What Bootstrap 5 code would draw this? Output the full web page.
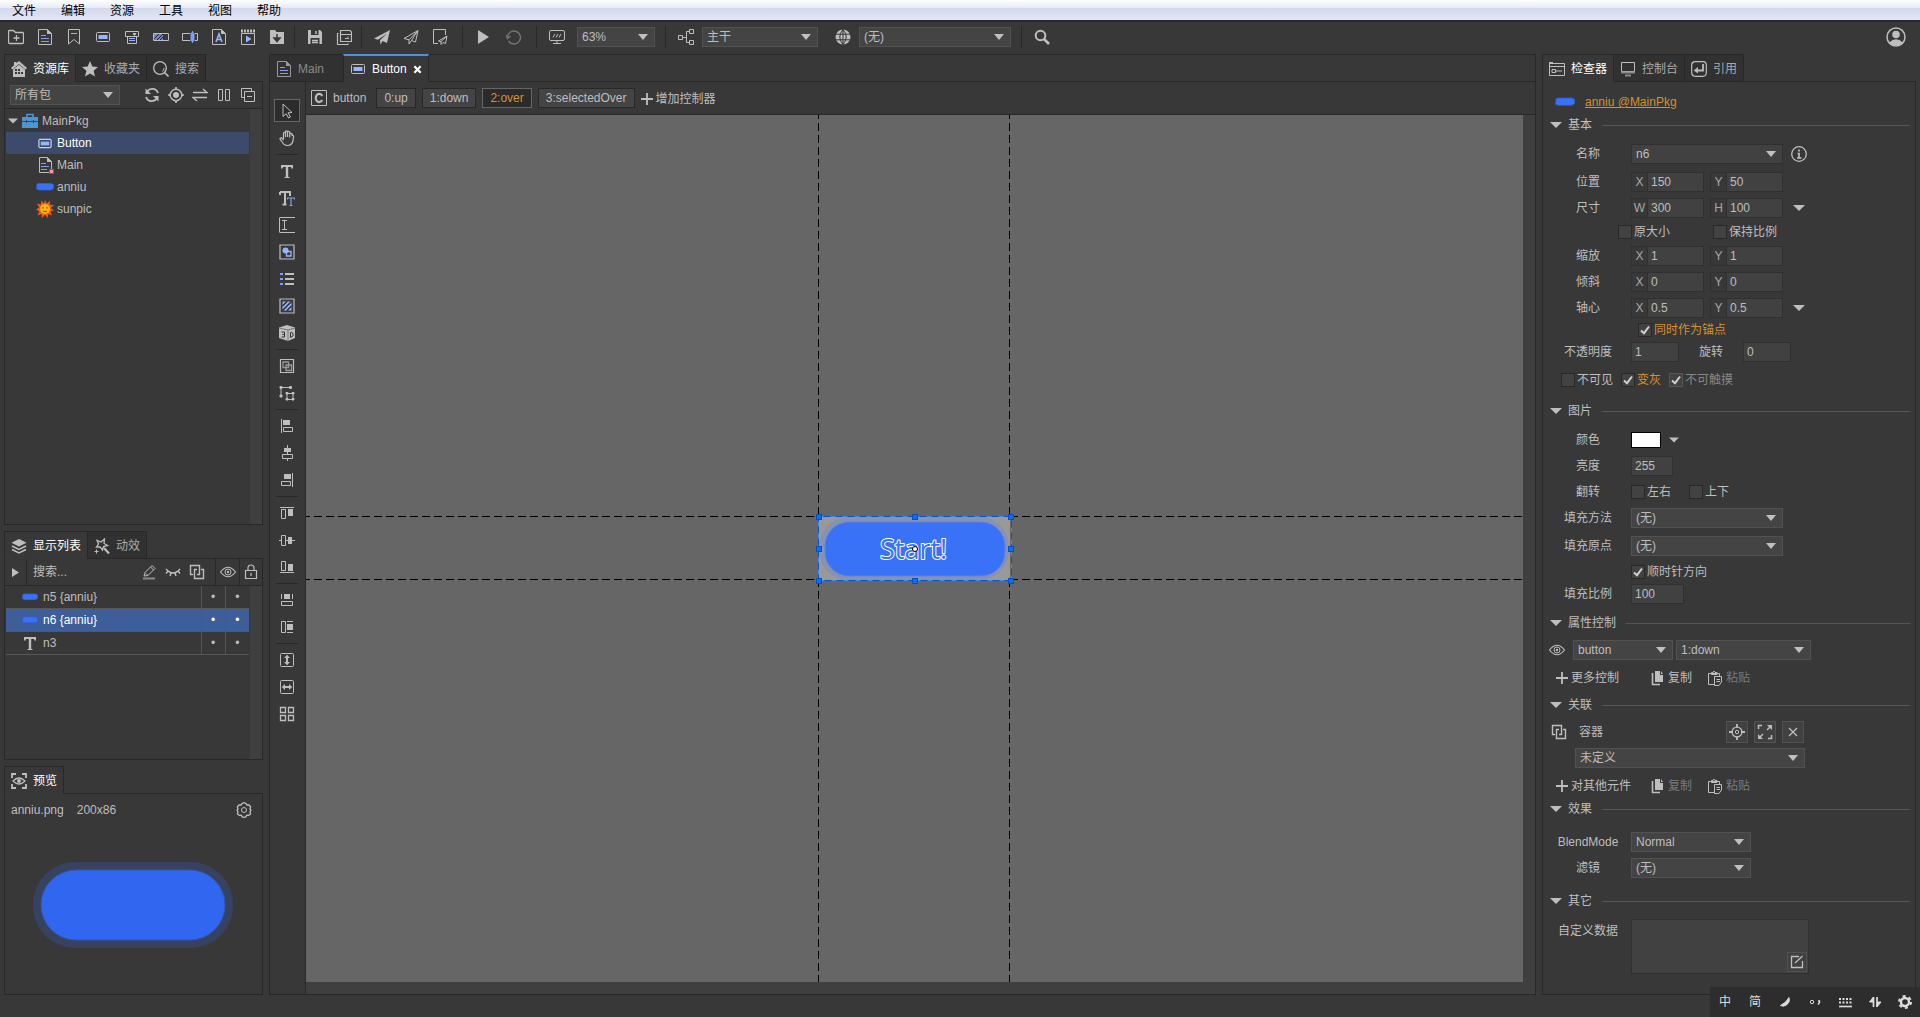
<!DOCTYPE html>
<html lang="zh-CN" data-bs-theme="dark">
<head>
<meta charset="utf-8">
<meta name="viewport" content="width=device-width, initial-scale=1">
<title>MainPkg - Button</title>
<link rel="stylesheet" href="https://cdn.jsdelivr.net/npm/bootstrap@5.3.0/dist/css/bootstrap.min.css">
<style>
:root{--bg:#383838;--line:#282828;--fg:#bebebe;--field:#444;--edge:#525252;--hot:#d4912f;--tint:#96b4ff}
body{background:var(--bg);color:var(--fg);font:12px/16px "Liberation Sans","Noto Sans CJK SC",sans-serif;overflow:hidden}
svg{flex:none;display:block}
.ic{width:16px;height:16px;fill:none;stroke:currentColor}
.ic-8{width:9px;height:9px}.ic-10{width:10px}.ic-12{width:12px}.ic-18{width:18px}.ic-20{width:20px;height:20px}
button,select,input,textarea{font:inherit!important;color:inherit}
.menubar{height:20px;background:linear-gradient(#fff 0,#e6e9f5 8px,#d3d9ec 8px,#e2e7f5 100%)}
.menubar a{color:#000;text-decoration:none;padding:3px 0 0 12px;margin-right:13px;line-height:17px}
.toolbar{height:34px;border-top:2px solid var(--line);padding:0 10px 3px 1px}
.tool{border:0;background:none;width:29px;height:27px;padding:0;display:flex;align-items:center;justify-content:center;color:var(--fg);border-radius:0}
.tool:hover{color:#fff}
.tool.idle{color:#757575}
.vsep{width:1px;height:22px;background:var(--line);margin:0 5px 0 3px}
.far{margin-left:10px}.near{margin-left:2px}
.form-select.pick{width:auto;height:20px;min-height:0;padding:0 20px 0 4px;border:1px solid var(--edge);border-radius:0;background:var(--field) url("data:image/svg+xml,%3Csvg xmlns='http://www.w3.org/2000/svg' width='10' height='6'%3E%3Cpath d='M0 0h10L5 6z' fill='%23c0c0c0'/%3E%3C/svg%3E") no-repeat right 6px center/10px 6px;color:var(--fg);line-height:18px}
.form-select.pick.combo{border-color:#303030;background-color:#414141}
.workspace{gap:6px;padding:0 4px 22px}
.sidecol{width:259px;gap:6px}
.inspector{width:374px}
.short{height:229px}
.tabrow{margin-bottom:-1px;position:relative;flex-wrap:nowrap}
.tabrow .nav-link{display:flex;align-items:center;gap:6px;height:28px;padding:2px 6px 0;border:1px solid var(--line);border-radius:0;background:#313131;color:#aaa;margin-right:-1px;line-height:16px}
.tabrow .nav-link.active{background:var(--bg);color:#fff;border-bottom-color:var(--bg)}
.tabrow .nav-link .ic{color:var(--fg)}
.panelbox{border:1px solid var(--line);background:var(--bg);min-height:0}
.subbar{height:27px;border-bottom:1px solid var(--line)}
.libbar{padding:0 6px 0 5px}
.track{width:12px;background:#3f3f3f}
.tree{padding:1px 1px 0}
.treerow{display:flex;align-items:center;height:22px;padding-left:30px;gap:3px;color:var(--fg);text-decoration:none}
.treerow.rootrow{padding-left:2px}
.treerow.picked{background:#3c4b6b;color:#fff}
.treerow .ic{height:18px}
.treerow .ic-key{height:15px}
.laywrap{padding:0 1px}
.laytable{width:243px;border-collapse:collapse}
.laytable td{height:22px;padding:0;border-bottom:1px solid #575757;line-height:16px}
.laytable td+td{width:24px;border-left:1px solid #575757;text-align:center}
.laytable .picked{background:#3d5e99;color:#fff}
.layname{display:flex;align-items:center;gap:4px;height:22px;padding-left:15px}
.foldcell{width:22px}
.searchbox{border:0;background:none;padding:0;width:80px;color:var(--fg)}
.searchbox::placeholder{color:var(--fg);opacity:1}
.searchcell{padding:0 10px 0 6px}
.doctabs{height:27px;margin:-1px 0 0 -1px}
.doctabs .nav-link{padding-right:19px;color:#8c8c8c}
.doctabs .nav-link .ic{color:#999}
.doctabs .nav-link.active{border-top:2px solid #4c92dc;padding:1px 6px 0}
.doctabs .nav-link.active .ic{color:var(--fg)}
.doctabs .nav-link.active .closer{color:#fff}
.docbody{border-top:1px solid var(--line)}
.strip{width:36px;padding:15px 1px 0 0;border-right:1px solid var(--line)}
.strip .tool{width:26px;height:23px;margin:2px 0}
.strip .tool.active{background:#2c2c2c;border:1px solid #666}
.strip .brk{width:22px;height:1px;background:var(--line);margin:3px 0 2px}
.ctrlbar{height:33px;padding-left:5px;gap:6px;border-bottom:1px solid var(--line)}
.page{height:20px;padding:0 7px;border:1px solid var(--line);border-radius:0;background:var(--field);color:var(--fg);line-height:17px}
.btn.page.active{background:#2b2b2b;border-color:#666;color:var(--hot)}
.ctrlbar .act{padding-top:2px}
.stagewrap{background:#3f3f3f;padding:0 12px 12px 0}
.stage{background:#666;position:relative;overflow:hidden}
.guide-h,.guide-v{position:absolute}
.guide-h{left:0;right:0;height:1px;background:repeating-linear-gradient(90deg,#000 0 4px,transparent 4px 8px,#000 8px 12px)}
.guide-v{top:0;bottom:0;width:1px;background:repeating-linear-gradient(#000 0 4px,transparent 4px 8px,#000 8px 12px)}
.g-top{top:calc(50% - 33px)}.g-bottom{top:calc(50% + 30px)}
.g-left{left:calc(50% - 97px)}.g-right{left:calc(50% + 94px)}
.sprite{position:absolute;left:calc(50% - 97px);top:calc(50% - 33px);overflow:visible}
.startlabel{font:27px "Open Sans","Noto Sans",sans-serif;fill:#3a72f7;stroke:#fff;stroke-width:2px;paint-order:stroke;stroke-linejoin:round}
.inspector .panelbox{padding:7px 5px 0 2px}
.reslink{padding-left:10px;gap:10px}
.hd{display:flex;align-items:center;height:20px;padding-left:5px;gap:6px}
.hd hr{flex:1;margin:0 0 0 4px;border-top:1px solid #555;opacity:1}
.hd .ic{width:12px}
.fr{display:flex;align-items:center;height:26px}
.fr.tight{height:22px}
.s6{margin-top:6px}.s2{margin-top:2px}.s10{margin-top:10px}
.fl{width:86px;text-align:center}
.fld{height:20px;width:56px;min-height:0;border:1px solid #303030;border-radius:0;background:#414141;color:var(--fg);padding:0 3px;line-height:18px}
.fld.pre{border-left:0}
.fld.f-s{width:42px}.fld.f-m{width:48px}.fld.f-l{width:53px}
.ax{width:17px;height:20px;border:1px solid #303030;text-align:center;line-height:18px;color:#a8a8a8}
.pair{width:79px}
.fld:focus,.pick:focus{box-shadow:none;border-color:#6b8fd6;background-color:#444}
.tick{display:flex;align-items:center;gap:2px}
.tick input{appearance:none;width:14px;height:14px;margin:0;border:1px solid var(--line);background:#424242 no-repeat center/10px 10px}
.tick input:checked{background-image:url("data:image/svg+xml,%3Csvg xmlns='http://www.w3.org/2000/svg' viewBox='0 0 10 10'%3E%3Cpath d='M1 5.5l3 2.7L9 1.5' fill='none' stroke='%23d0d0d0' stroke-width='2'/%3E%3C/svg%3E")}
.tick.dim{color:#868686}.tick.dim input{border-color:#575757}
.keepsize{padding-left:73px}.keepsize .tick:first-child{width:95px}
.anchor.fr{padding-left:93px;height:18px}
.flip{width:58px}
.rotlabel{width:64px;text-align:center}
.hot{color:var(--hot)}
.act{border:0;background:none;padding:0;display:flex;align-items:center;gap:3px;color:var(--fg)}
.act.off{color:#7a7a7a}.act .ic{color:var(--fg)}
.vcell{height:100%;border-right:1px solid var(--line)}
.eyecell{width:24px}.lockcell{width:22px}
.actrow{padding-left:11px}
.actrow .act:nth-child(1){width:93px}.actrow .act:nth-child(2){width:58px}
.relrow{padding-left:6px;gap:12px}
.relbtns{gap:6px;margin:0 106px 0 auto}
.relpick{padding-left:30px}
.sq{width:22px;height:22px;padding:0;border:1px solid var(--edge);border-radius:0;background:#414141;display:flex;align-items:center;justify-content:center;color:var(--fg)}
.swatch{width:30px;height:16px;border:1px solid #000;background:#fff;padding:0}
.memo.fld{width:178px;height:55px;resize:none}
.memowrap{position:relative}
.memowrap .sq{position:absolute;right:2px;bottom:2px;width:20px;height:20px}
.pvhead{padding:8px 10px 0 6px;gap:13px}
.pvbody{padding:0 2px 2px 0}
.imebar{position:absolute;right:0;bottom:0;width:210px;height:30px;background:#2d2d2d;color:#ddd;z-index:5}
.imebar button{width:30px;border:0;background:none;padding:0;display:flex;justify-content:center;align-items:center}
.form-select.w-pack{width:110px}.form-select.w-zoom{width:78px;margin-left:6px}.form-select.w-br{width:116px}.form-select.w-lang{width:152px}
.form-select.w-ctl{width:100px}.form-select.w-pg{width:135px;margin-left:3px}.form-select.w-rel{width:230px}.form-select.w-fx{width:120px}
</style>
</head>
<body class="d-flex flex-column vh-100 position-relative">
<svg width="0" height="0" class="position-absolute" aria-hidden="true">
<defs>
<symbol id="folder" viewBox="0 0 16 16"><path d="M.5 13V2.500Q.5 1.500 1.500 1.500H5.500L7.500 3.500H14.500Q15.500 3.500 15.500 4.500V13.500Q15.500 14.500 14.500 14.500H1.500Q.5 14.500 .5 13ZM8.500 6V12M5.500 9H11.500" stroke-width="1.300"/></symbol>
<symbol id="doc" viewBox="0 0 16 16"><path d="M1.500.500H10.500L14.500 4.500V15.500H1.500Z"/><path d="M10 0L15 5H10Z" fill="currentColor" stroke="none"/><path d="M4 6.500H9M4 9.500H12M4 12.500H12" stroke="#7f9ff0"/></symbol>
<symbol id="mark" viewBox="0 0 16 16"><path d="M2.500.500H13.500V15L8 10.500L2.500 15Z"/><path d="M5 4.500H11" stroke="#96b4ff"/></symbol>
<symbol id="btnic" viewBox="0 0 16 16"><rect x="1.500" y="3.500" width="13" height="9" rx="1"/><rect x="3.500" y="6" width="9" height="4" fill="#96b4ff" stroke="none"/></symbol>
<symbol id="print" viewBox="0 0 16 16"><path d="M1.500 2.500H14.500V7.500H1.500ZM3.500 7.500V14.500H12.500V7.500"/><path d="M9 4.500H12L10.500 6.500Z" fill="currentColor"/><path d="M5 9.500H11M5 11.500H11" stroke="#96b4ff"/></symbol>
<symbol id="prog" viewBox="0 0 16 16"><path d="M.5 4.500H15.500V11.500H.500Z"/><path d="M1 5H10V11H1Z" fill="#6f88c8" stroke="none"/><path d="M1 10L6 5M4 11L10 5M7 11L10 8" stroke="#222"/></symbol>
<symbol id="slide" viewBox="0 0 16 16"><path d="M8 4.500H.500V11.500H8M13 4.500H15.500V11.500H13"/><path d="M9 4H12V12H9ZM10.500 2V14" stroke="#7f9ff0" fill="#7f9ff0"/></symbol>
<symbol id="fontic" viewBox="0 0 16 16"><path d="M1.500.500H10.500L14.500 4.500V15.500H1.500Z"/><path d="M10 0L15 5H10Z" fill="currentColor" stroke="none"/><path d="M5 13L8 5L11 13M6 10.500H10" stroke="#96b4ff" stroke-width="1.600"/></symbol>
<symbol id="movie" viewBox="0 0 16 16"><path d="M1.500 4.500H14.500V15.500H1.500Z"/><path d="M1 2H15" stroke-width="3" stroke-dasharray="2 1"/><path d="M6 6.500L11.500 10L6 13.500Z" fill="#96b4ff" stroke="none"/></symbol>
<symbol id="import" viewBox="0 0 16 16"><path d="M1 1H6L7.500 3H15V15H1Z" fill="currentColor" stroke="none"/><path d="M8 5V10M5 9L8 12.500L11 9Z" stroke="#383838" stroke-width="1.500" fill="#383838"/></symbol>
<symbol id="save" viewBox="0 0 16 16"><path d="M1 1H13L15 3V15H1Z" fill="currentColor" stroke="none"/><path d="M4 1H11.500V6H4ZM3.500 9H12.500V15H3.500Z" fill="#383838" stroke="none"/><path d="M9 2V5M5 11.500H11M5 13.500H11" stroke-width="1.500"/></symbol>
<symbol id="saveall" viewBox="0 0 16 16"><path d="M4.500 1.500H14L15.500 3V12.500H4.500ZM4.500 5.500H15.500M12 7.500V8.500M9 9.500H13M2.500 4.500H1.500V15.500H12V14.500" stroke-width="1.200"/></symbol>
<symbol id="plane" viewBox="0 0 16 16"><path d="M0 9.500L16 1L13 14L8.500 12L6.500 15.500L6 11.200L13 4.500L4 10.800Z" fill="currentColor" stroke="none"/></symbol>
<symbol id="plane2" viewBox="0 0 16 16"><path d="M1 9.500L15 1.500L12.500 13L8.500 11.500L6 15V10.800ZM6 10.800L14.500 2M8.500 11.500L14.500 2"/></symbol>
<symbol id="docplane" viewBox="0 0 16 16"><path d="M6 14.500H1.500V.500H13.500V6M6.500 12L15 7L13.500 14.500L11 13.500L9 15.500V12.500ZM9 12.500L15 7"/></symbol>
<symbol id="play" viewBox="0 0 16 16"><path d="M3 1L14 8L3 15Z" fill="currentColor" stroke="none"/></symbol>
<symbol id="fold" viewBox="0 0 9 9"><path d="M1 0L8 4.500L1 9Z" fill="currentColor" stroke="none"/></symbol>
<symbol id="undo" viewBox="0 0 16 16"><path d="M2.500 12A6.500 6.500 0 1 0 1.500 8" stroke-width="1.400"/><path d="M0 6L1.500 9.500L4.500 7" stroke-width="1.400"/></symbol>
<symbol id="monitor" viewBox="0 0 16 16"><rect x=".5" y="1.500" width="15" height="10" rx="1.500"/><path d="M8 12V14.500M4 14.500H12M4 8.500L6 5M7 8.500L9 5M10 8.500L12 5"/></symbol>
<symbol id="branch" viewBox="0 0 16 16"><path d="M.5 6.500H4.500V10.500H.500ZM11.500 .500H15.500V4.500H11.500ZM11.500 11.500H15.500V15.500H11.500ZM4.500 8.500H8.500M11.500 2.500H8.500V13.500H11.500"/></symbol>
<symbol id="globe" viewBox="0 0 16 16"><circle cx="8" cy="8" r="7.500" fill="currentColor" stroke="none"/><path d="M0 5.200H16M0 10.800H16M8 0V16M8 .500Q1.500 8 8 15.500M8 .500Q14.500 8 8 15.500" stroke="#383838"/></symbol>
<symbol id="find" viewBox="0 0 16 16"><circle cx="6.500" cy="6.500" r="4.800" stroke-width="2"/><path d="M10 10L15 15" stroke-width="2.600"/></symbol>
<symbol id="user" viewBox="0 0 16 16"><circle cx="8" cy="8" r="7.200" stroke-width="1.200"/><circle cx="8" cy="6" r="3" fill="currentColor" stroke="none"/><path d="M2.500 12.500Q8 7 13.500 12.500Q8 17 2.500 12.500" fill="currentColor" stroke="none"/></symbol>
<symbol id="home" viewBox="0 0 16 16"><path d="M3 1H5.500V4H3ZM8 0L16 7L14.500 8.500L8 3L1.500 8.500L0 7Z" fill="currentColor" stroke="none"/><path d="M2 8.500L8 3.800L14 8.500V16H2Z" fill="currentColor" stroke="none"/><path d="M4 8H6V10H4ZM7 8H9V10H7ZM4 11H6V13H4ZM7 11H9V13H7ZM10 11H12V13H10Z" fill="#383838" stroke="none"/></symbol>
<symbol id="star" viewBox="0 0 16 16"><path d="M8 0L10.300 5.600L16 6L11.600 9.800L13 15.500L8 12.400L3 15.500L4.400 9.800L0 6L5.700 5.600Z" fill="currentColor" stroke="none"/></symbol>
<symbol id="lens" viewBox="0 0 16 16"><circle cx="7" cy="7" r="6.300" stroke-width="1.300"/><path d="M11.500 11.500L15.500 15.500" stroke-width="1.600"/><path d="M9.500 10.500Q11 9 11 7"/></symbol>
<symbol id="sync" viewBox="0 0 16 16"><path d="M2.500 6.500A6 6 0 0 1 14 6M13.500 9.500A6 6 0 0 1 2 10" stroke-width="1.800"/><path d="M1.500 1.500V7H7ZM14.500 14.500V9H9Z" fill="currentColor" stroke="none"/></symbol>
<symbol id="aim" viewBox="0 0 16 16"><circle cx="8" cy="8" r="5.800" stroke-width="1.400"/><circle cx="8" cy="8" r="3" fill="currentColor" stroke="none"/><path d="M8 0V3M8 13V16M0 8H3M13 8H16" stroke-width="1.600"/></symbol>
<symbol id="swap" viewBox="0 0 16 16"><path d="M1 5.500H15L11 2M15 10.500H1L5 14" stroke-width="1.300"/></symbol>
<symbol id="cols" viewBox="0 0 16 16"><path d="M2.500 2.500H6.500V13.500H2.500ZM9.500 2.500H13.500V13.500H9.500Z"/></symbol>
<symbol id="collapse" viewBox="0 0 16 16"><path d="M4.500 4.500H14.500V14.500H4.500ZM4 10.500H1.500V1.500H11.500V4M7 9.500H12"/></symbol>
<symbol id="tri" viewBox="0 0 12 16"><path d="M0 5H12L6 11Z" fill="currentColor" stroke="none"/></symbol>
<symbol id="case" viewBox="0 0 18 18"><path d="M6 5V2.500H12V5" stroke="#4c97cf" stroke-width="1.600"/><path d="M1 5H17V16H1Z" fill="#4c97cf" stroke="none"/><path d="M1 9.500H17M5.500 8V11M12.500 8V11" stroke="#2a4c66"/></symbol>
<symbol id="pill" viewBox="0 0 18 18"><path d="M1 6L3 5.500H15L17.500 6.500V10.500L15 12H3L.500 11Z" fill="#3a72f7" stroke="#2d5fd8" stroke-width=".8"/></symbol>
<symbol id="sun" viewBox="0 0 18 18"><path d="M9 0L10.500 3.500L14 1L13.800 4.700L18 5L14.800 8L18 10.500L14.500 11.300L16 15.500L12.300 14L11.500 18L9 14.800L6 18L5.500 14L1.500 15.500L3.300 11.500L0 9.500L3.300 7.500L.8 3.500L4.800 4.500L5.500 .500L8 3.500Z" fill="#f4591c" stroke="none"/><circle cx="9" cy="9" r="5" fill="#fdb316" stroke="none"/><path d="M7 7V8.500M11 7V8.500M7 11Q9 12.500 11 11" stroke="#7a4a10"/></symbol>
<symbol id="docred" viewBox="0 0 18 18"><path d="M3.500 1.500H11.500L15.500 5.500V16.500H3.500Z"/><path d="M11 1L16 6H11Z" fill="currentColor" stroke="none"/><path d="M5 7.500H10M5 10.500H13M5 13.500H11" stroke="#7f9ff0"/><rect x="13.500" y="13.500" width="4" height="4" fill="#f99" stroke="#e03030"/></symbol>
<symbol id="layers" viewBox="0 0 16 16"><path d="M8 1L15.500 4.800L8 8.500L.500 4.800Z" fill="currentColor" stroke="none"/><path d="M1 8L8 11.500L15 8M1 11.500L8 15L15 11.500" stroke-width="1.500"/></symbol>
<symbol id="wand" viewBox="0 0 16 16"><path d="M7 4L10.500 1L10 5.500L13.500 7.500L9.500 8.500L8.500 12L6 8.800L2.500 9L4.500 6L3 2.500Z" stroke-width="1.300"/><path d="M10 10L15 15.500" stroke-width="2.200"/><path d="M2.500 11.500V15.500M.5 13.500H4.500"/></symbol>
<symbol id="pencil" viewBox="0 0 16 16"><path d="M3 12L4 8.500L11 1.500L14 4.500L7 11.500ZM9.500 3L12.500 6M5 9.500L6.500 11"/><path d="M2 14.500H14" stroke-width="2" stroke="#8a8a8a"/></symbol>
<symbol id="lash" viewBox="0 0 16 16"><path d="M1 5Q8 13 15 5M3 7L1 9.500M6 9L5 12M10 9L11 12M13 7L15 9.500" stroke-width="1.400"/></symbol>
<symbol id="link2" viewBox="0 0 16 16"><path d="M8 10.500H10.500V1.500H1.500V10.500H4M8 5.500H5.500V14.500H14.500V5.500H12" stroke-width="1.400"/></symbol>
<symbol id="eye" viewBox="0 0 16 16"><path d="M.5 8Q8 -1.500 15.500 8Q8 17.500 .500 8Z" stroke-width="1.200"/><circle cx="8" cy="8" r="3"/><circle cx="8" cy="8" r="1.200" fill="currentColor" stroke="none"/></symbol>
<symbol id="lock" viewBox="0 0 16 16"><path d="M2.500 6.500H13.500V14.500H2.500ZM5 6.500V4Q5 1 8 1Q11 1 11 4V6.500M8 9V12" stroke-width="1.200"/></symbol>
<symbol id="scan" viewBox="0 0 16 16"><path d="M1 5V1H5M11 1H15V5M15 11V15H11M5 15H1V11" stroke-width="1.800"/><path d="M2 8Q8 2 14 8Q8 14 2 8Z" stroke-width="1.200"/><circle cx="8" cy="8" r="2" fill="currentColor" stroke="none"/></symbol>
<symbol id="gear" viewBox="0 0 16 16"><path d="M8 .7L10 1.500L10.800 3L13 3L14.600 4.800L14 7L15 8.200L14 9.800L14.500 12L12.800 13.300L10.800 13.200L9.800 14.800L8 15.400L6.200 14.800L5.200 13.200L3.200 13.300L1.500 12L2 9.800L1 8.200L2 7L1.400 4.800L3 3L5.200 3L6 1.500Z" stroke-width="1.300" stroke-linejoin="round"/><circle cx="8" cy="8" r="2.500"/></symbol>
<symbol id="arrow" viewBox="0 0 16 16"><path d="M4 1L13 9.500L9 9.800L11.500 14L9.500 15L7.300 10.800L4 13.500Z"/></symbol>
<symbol id="hand" viewBox="0 0 16 16"><path d="M4.500 9V3Q5.500 1.500 6.500 3V7V1.500Q7.500 .300 8.500 1.500V7V2Q9.800 .800 10.700 2V7.500V4Q12 2.800 13 4V5.500Q15 5 14.500 7L14 11Q13 15 9 15.500Q5 15.500 3.500 12.500L1 9Q1 7.500 2.500 7.800L4.500 10" stroke-width="1.200"/></symbol>
<symbol id="tee" viewBox="0 0 16 16"><path d="M2 2H14V5.500H12.500L12 4H9.200V14H10.500V15H5.500V14H6.800V4H4L3.500 5.500H2Z" fill="currentColor" stroke="none"/></symbol>
<symbol id="tee2" viewBox="0 0 16 16"><path d="M1 2H11V5H10M1 5V2M6 2V14M3.500 14.500H7.500" stroke-width="2"/><path d="M8.500 9.500V8H15.500V9.500M12 8V15M10.500 15.500H13.500" stroke="#7f9ff0" stroke-width="1.200"/></symbol>
<symbol id="input" viewBox="0 0 16 16"><path d="M16 .500H1Q.500.500 .500 1V15Q.500 15.500 1 15.500H16M3 3.500H8M5.500 3.500V12.500M3 12.500H8"/></symbol>
<symbol id="shape" viewBox="0 0 16 16"><path d="M1 1H15V15H1Z" stroke-width="1.200"/><circle cx="6.500" cy="6.500" r="3" fill="#96b4ff" stroke="none"/><path d="M7.500 7.500H12V12H7.500Z" stroke="#96b4ff" stroke-width="1.300"/></symbol>
<symbol id="list" viewBox="0 0 16 16"><path d="M6 3H15M6 8H15M6 13H15" stroke-width="2"/><path d="M1 3H4M1 8H4M1 13H4" stroke="#7f9ff0" stroke-width="2"/></symbol>
<symbol id="hatch" viewBox="0 0 16 16"><path d="M1 1H15V15H1Z" stroke-width="1.200"/><path d="M3.500 3.500H12.500V12.500H3.500Z" fill="#96b4ff" stroke="none"/><path d="M3.500 8L8 3.500M3.500 12.500L12.500 3.500M8 12.500L12.500 8" stroke="#2c2c2c" stroke-width="1.500"/></symbol>
<symbol id="cube" viewBox="0 0 16 16"><path d="M8 0L16 2.500V13L9 16L0 13V2.500Z" fill="currentColor" stroke="none"/><path d="M0 3L9 5L16 3M9 5V16" stroke="#777"/><path d="M2.500 7H5.500V12H2.500M3.500 9.500H5.500M11.500 12.500V7.500Q14.500 6.500 14 11Z" stroke="#333"/></symbol>
<symbol id="group" viewBox="0 0 16 16"><path d="M1.500 1.500H14.500V14.500H1.500Z" stroke-width="1.200"/><path d="M4 4H9.500V9.500H4ZM7 7H12.500V12.500H7Z" stroke="#999" stroke-width="1.300"/></symbol>
<symbol id="nodes" viewBox="0 0 16 16"><path d="M2 11V2.500H12" /><path d="M1 1.500H3V3.500H1ZM10.500 1.500H12.500V3.500H10.500ZM1 10H3V12H1ZM7 7.500H9V9H7ZM13 7.500H15V9H13ZM7 13.500H9V15H7ZM13 13.500H15V15H13Z" fill="currentColor"/><path d="M8 8.500H14V14.500H8Z"/></symbol>
<symbol id="al" viewBox="0 0 16 16"><path d="M2.500 1V15M4.500 9.500H13.500V13.500H4.500Z"/><path d="M4 2H11V7H4Z" fill="currentColor" stroke="none"/></symbol>
<symbol id="ac" viewBox="0 0 16 16"><path d="M8.500 0V16"/><path d="M5 3H12V7H5Z" fill="currentColor" stroke="none"/><path d="M3.500 9.500H13.500V13.500H3.500Z" fill="#383838"/></symbol>
<symbol id="ar" viewBox="0 0 16 16"><path d="M13.500 1V15M2.500 9.500H11.500V13.500H2.500Z"/><path d="M5 2H12V7H5Z" fill="currentColor" stroke="none"/></symbol>
<symbol id="at" viewBox="0 0 16 16"><path d="M1 2.500H15M2.500 4.500H6.500V13.500H2.500Z"/><path d="M9 4H14V11H9Z" fill="currentColor" stroke="none"/></symbol>
<symbol id="am" viewBox="0 0 16 16"><path d="M0 8.500H16"/><path d="M9 5H13V12H9Z" fill="currentColor" stroke="none"/><path d="M2.500 3.500H6.500V13.500H2.500Z" fill="#383838"/></symbol>
<symbol id="ab" viewBox="0 0 16 16"><path d="M1 13.500H15M2.500 2.500H6.500V11.500H2.500Z"/><path d="M9 5H14V12H9Z" fill="currentColor" stroke="none"/></symbol>
<symbol id="sw" viewBox="0 0 16 16"><path d="M2.500 2V7M13.500 2V7M2.500 9.500H13.500V13.500H2.500Z"/><path d="M5 2H11V7H5Z" fill="currentColor" stroke="none"/></symbol>
<symbol id="sh" viewBox="0 0 16 16"><path d="M8 2.500H14M8 13.500H14M2.500 2.500H6.500V13.500H2.500Z"/><path d="M8 5H14V11H8Z" fill="currentColor" stroke="none"/></symbol>
<symbol id="eh" viewBox="0 0 16 16"><rect x="1.500" y="1.500" width="13" height="13" rx="1"/><path d="M8 5V11" stroke-width="2"/><path d="M5 6L8 2.800L11 6ZM5 10L8 13.200L11 10Z" fill="currentColor" stroke="none"/></symbol>
<symbol id="ew" viewBox="0 0 16 16"><rect x="1.500" y="1.500" width="13" height="13" rx="1"/><path d="M5 8H11" stroke-width="2"/><path d="M6 5L2.800 8L6 11ZM10 5L13.200 8L10 11Z" fill="currentColor" stroke="none"/></symbol>
<symbol id="grid4" viewBox="0 0 16 16"><path d="M1.500 1.500H6.500V6.500H1.500ZM9.500 1.500H14.500V6.500H9.500ZM1.500 9.500H6.500V14.500H1.500ZM9.500 9.500H14.500V14.500H9.500Z" stroke-width="1.300"/></symbol>
<symbol id="cbox" viewBox="0 0 16 16"><path d="M.5.500H15.500V15.500H.500Z"/><path d="M11.500 5.800Q8.500 2.500 5.700 5Q3.800 8 5.700 11Q8.500 13.500 11.500 10.200" stroke-width="2"/></symbol>
<symbol id="plus" viewBox="0 0 12 12"><path d="M6 0V12M0 6H12" stroke-width="1.800"/></symbol>
<symbol id="x" viewBox="0 0 10 10"><path d="M1 1L9 9M9 1L1 9" stroke-width="1.300"/></symbol>
<symbol id="xb" viewBox="0 0 10 10"><path d="M1.500 1.500L8.500 8.500M8.500 1.500L1.500 8.500" stroke-width="2.400"/></symbol>
<symbol id="insp" viewBox="0 0 16 16"><path d="M.5 2.500H15.500V14.500H.500ZM.500 5.500H15.500M3 8.500H6.500V11.500H3ZM6.500 10H13"/><path d="M0 1H4V3H0Z" fill="currentColor" stroke="none"/></symbol>
<symbol id="screen" viewBox="0 0 16 16"><path d="M1.500 1.500H14.500V10.500H1.500Z"/><path d="M1 11.500H15M5 14.500H11" stroke-width="2" stroke="#8a8a8a"/></symbol>
<symbol id="ret" viewBox="0 0 16 16"><rect x=".7" y=".7" width="14.600" height="14.600" rx="3.500" stroke-width="1.200"/><path d="M12 3V9.500H6" stroke-width="1.800"/><path d="M7 6L2.800 9.500L7 12.500Z" fill="currentColor" stroke="none"/></symbol>
<symbol id="info" viewBox="0 0 16 16"><circle cx="8" cy="8" r="7.300" stroke-width="1.300"/><path d="M8 3.500V5.500M6.500 7.500H8V12M6 12H10.500" stroke-width="1.700"/></symbol>
<symbol id="copy" viewBox="0 0 16 16"><path d="M6 1H11V5H14V12H6Z" fill="currentColor" stroke="none"/><path d="M12 1L14 4H12Z" fill="currentColor" stroke="none"/><path d="M3.500 3V14.500H11" stroke-width="1.600"/></symbol>
<symbol id="paste" viewBox="0 0 16 16"><path d="M7 14.500H1.500V3.500H12.500V6M4.500 4.500V2.500H6L7 1L8 2.500H10V4.500ZM7.500 6.500H14.500V12L12 15.500H7.500ZM9.500 9.500H13M9.500 11.500H13"/></symbol>
<symbol id="target" viewBox="0 0 16 16"><circle cx="8" cy="8" r="5" stroke-width="1.200"/><circle cx="8" cy="8" r="1.700"/><path d="M8 0V4M8 12V16M0 8H4M12 8H16" stroke-width="1.800"/></symbol>
<symbol id="expand" viewBox="0 0 16 16"><path d="M1.500 5V1.500H5M11 14.500H14.500V11M10 6L14 2M2 14L6 10" stroke-width="1.500"/><path d="M10 1H15V6ZM1 10V15H6Z" fill="currentColor" stroke="none"/></symbol>
<symbol id="edit" viewBox="0 0 16 16"><path d="M10 2.500H2.500V13.500H13.500V7M6 9L13.500 2" stroke-width="1.300"/></symbol>
<symbol id="moon" viewBox="0 0 16 16"><path d="M12 3.500Q13.500 8 9.500 11Q6.500 13 3.500 11.500Q9 9 12 3.500Z" fill="currentColor"/></symbol>
<symbol id="punct" viewBox="0 0 16 16"><circle cx="5" cy="8" r="1.700"/><path d="M11 7H12.500V8.500L11 10.500" stroke-width="1.400"/></symbol>
<symbol id="keys" viewBox="0 0 16 16"><path d="M2 5H15M2 8.500H15" stroke-width="2" stroke-dasharray="2 1.500"/><path d="M2 12.500H15" stroke-width="1.600"/></symbol>
<symbol id="updown" viewBox="0 0 16 16"><path d="M6.500 3V13M10 3V13" stroke-width="1.700"/><path d="M2.500 8L6.500 3V8ZM14 8L10 13V8Z" fill="currentColor"/></symbol>
<symbol id="cog" viewBox="0 0 16 16"><circle cx="8" cy="8" r="4" stroke-width="2.400"/><circle cx="8" cy="8" r="6" stroke-width="2" stroke-dasharray="3 3.280"/></symbol>
</defs>
</svg>

<nav class="menubar d-flex flex-shrink-0">
<a href="#">文件</a><a href="#">编辑</a><a href="#">资源</a><a href="#">工具</a><a href="#">视图</a><a href="#">帮助</a>
</nav>

<header class="toolbar d-flex align-items-center flex-shrink-0">
<button class="tool" aria-label="新建包"><svg class="ic"><use href="#folder"/></svg></button>
<button class="tool" aria-label="新建组件"><svg class="ic"><use href="#doc"/></svg></button>
<button class="tool" aria-label="新建标签"><svg class="ic"><use href="#mark"/></svg></button>
<button class="tool" aria-label="新建按钮"><svg class="ic"><use href="#btnic"/></svg></button>
<button class="tool" aria-label="新建下拉框"><svg class="ic"><use href="#print"/></svg></button>
<button class="tool" aria-label="新建进度条"><svg class="ic"><use href="#prog"/></svg></button>
<button class="tool" aria-label="新建滑动条"><svg class="ic"><use href="#slide"/></svg></button>
<button class="tool" aria-label="新建字体"><svg class="ic"><use href="#fontic"/></svg></button>
<button class="tool" aria-label="新建动画"><svg class="ic"><use href="#movie"/></svg></button>
<button class="tool" aria-label="导入"><svg class="ic"><use href="#import"/></svg></button>
<span class="vsep"></span>
<button class="tool" aria-label="保存"><svg class="ic"><use href="#save"/></svg></button>
<button class="tool" aria-label="全部保存"><svg class="ic"><use href="#saveall"/></svg></button>
<span class="vsep"></span>
<button class="tool" aria-label="发布"><svg class="ic"><use href="#plane"/></svg></button>
<button class="tool" aria-label="发布设置"><svg class="ic"><use href="#plane2"/></svg></button>
<button class="tool" aria-label="发布文件"><svg class="ic"><use href="#docplane"/></svg></button>
<span class="vsep ms-2"></span>
<button class="tool" aria-label="播放"><svg class="ic"><use href="#play"/></svg></button>
<button class="tool idle near" aria-label="还原"><svg class="ic"><use href="#undo"/></svg></button>
<span class="vsep ms-2"></span>
<button class="tool" aria-label="缩放"><svg class="ic"><use href="#monitor"/></svg></button>
<select class="form-select pick w-zoom" aria-label="缩放比例"><option>63%</option></select>
<span class="vsep far"></span>
<button class="tool" aria-label="分支"><svg class="ic"><use href="#branch"/></svg></button>
<select class="form-select pick w-br near" aria-label="分支"><option>主干</option></select>
<button class="tool far" aria-label="语言"><svg class="ic"><use href="#globe"/></svg></button>
<select class="form-select pick w-lang near" aria-label="语言"><option>(无)</option></select>
<span class="vsep far"></span>
<button class="tool" aria-label="查找"><svg class="ic"><use href="#find"/></svg></button>
<button class="tool ms-auto" aria-label="账户"><svg class="ic ic-20"><use href="#user"/></svg></button>
</header>

<main class="workspace d-flex flex-grow-1">
<aside class="sidecol d-flex flex-column flex-shrink-0">
<section class="d-flex flex-column flex-grow-1">
<ul class="nav tabrow">
<li><button class="nav-link active"><svg class="ic"><use href="#home"/></svg>资源库</button></li>
<li><button class="nav-link"><svg class="ic"><use href="#star"/></svg>收藏夹</button></li>
<li><button class="nav-link"><svg class="ic"><use href="#lens"/></svg>搜索</button></li>
</ul>
<div class="panelbox d-flex flex-column flex-grow-1">
<div class="subbar libbar d-flex align-items-center">
<select class="form-select pick w-pack" aria-label="包"><option>所有包</option></select>
<div class="d-flex gap-2 ms-auto">
<button class="act" aria-label="刷新"><svg class="ic"><use href="#sync"/></svg></button>
<button class="act" aria-label="定位"><svg class="ic"><use href="#aim"/></svg></button>
<button class="act" aria-label="切换"><svg class="ic"><use href="#swap"/></svg></button>
<button class="act" aria-label="分栏"><svg class="ic"><use href="#cols"/></svg></button>
<button class="act" aria-label="折叠"><svg class="ic"><use href="#collapse"/></svg></button>
</div></div>
<div class="d-flex flex-grow-1">
<div class="tree flex-grow-1">
<a href="#" class="treerow rootrow"><svg class="ic ic-10"><use href="#tri"/></svg><svg class="ic ic-18"><use href="#case"/></svg>MainPkg</a>
<a href="#" class="treerow picked"><svg class="ic ic-18 ic-key"><use href="#btnic"/></svg>Button</a>
<a href="#" class="treerow"><svg class="ic ic-18"><use href="#docred"/></svg>Main</a>
<a href="#" class="treerow"><svg class="ic ic-18"><use href="#pill"/></svg>anniu</a>
<a href="#" class="treerow"><svg class="ic ic-18"><use href="#sun"/></svg>sunpic</a>
</div>
<div class="track"></div>
</div>
</div>
</section>

<section class="short d-flex flex-column">
<ul class="nav tabrow">
<li><button class="nav-link active"><svg class="ic"><use href="#layers"/></svg>显示列表</button></li>
<li><button class="nav-link"><svg class="ic"><use href="#wand"/></svg>动效</button></li>
</ul>
<div class="panelbox d-flex flex-column flex-grow-1">
<div class="subbar d-flex align-items-center">
<button class="act vcell foldcell justify-content-center" aria-label="展开"><svg class="ic ic-8"><use href="#fold"/></svg></button>
<div class="vcell searchcell d-flex align-items-center flex-grow-1 gap-2"><input class="searchbox me-auto" aria-label="搜索" placeholder="搜索...">
<button class="act" aria-label="编辑"><svg class="ic"><use href="#pencil"/></svg></button>
<button class="act" aria-label="隐藏"><svg class="ic"><use href="#lash"/></svg></button>
<button class="act" aria-label="关联"><svg class="ic"><use href="#link2"/></svg></button></div>
<button class="act vcell eyecell justify-content-center" aria-label="可见"><svg class="ic"><use href="#eye"/></svg></button>
<button class="act lockcell justify-content-center" aria-label="锁定"><svg class="ic"><use href="#lock"/></svg></button>
</div>
<div class="d-flex flex-grow-1">
<div class="laywrap flex-grow-1">
<table class="laytable">
<tr><td><span class="layname"><svg class="ic ic-18"><use href="#pill"/></svg>n5 {anniu}</span></td><td>•</td><td>•</td></tr>
<tr class="picked"><td><span class="layname"><svg class="ic ic-18"><use href="#pill"/></svg>n6 {anniu}</span></td><td>•</td><td>•</td></tr>
<tr><td><span class="layname"><svg class="ic ic-18"><use href="#tee"/></svg>n3</span></td><td>•</td><td>•</td></tr>
</table>
</div>
<div class="track"></div>
</div>
</div>
</section>

<section class="short d-flex flex-column">
<ul class="nav tabrow">
<li><button class="nav-link active"><svg class="ic"><use href="#scan"/></svg>预览</button></li>
</ul>
<div class="panelbox d-flex flex-column flex-grow-1">
<div class="pvhead d-flex align-items-center"><span>anniu.png</span><span>200x86</span><button class="act ms-auto" aria-label="设置"><svg class="ic"><use href="#gear"/></svg></button></div>
<div class="pvbody d-flex flex-grow-1 align-items-center justify-content-center">
<svg width="200" height="86"><rect width="200" height="86" rx="42" fill="#374260"/><rect x="8" y="8" width="184" height="70" rx="35" fill="#3167f0" stroke="#3456a8"/></svg>
</div>
</div>
</section>
</aside>

<section class="panelbox d-flex flex-column flex-grow-1">
<ul class="nav tabrow doctabs">
<li><button class="nav-link"><svg class="ic"><use href="#doc"/></svg>Main</button></li>
<li><button class="nav-link active"><svg class="ic"><use href="#btnic"/></svg>Button<svg class="ic ic-8 closer"><use href="#xb"/></svg></button></li>
</ul>
<div class="docbody d-flex flex-grow-1">
<div class="strip d-flex flex-column align-items-center flex-shrink-0">
<button class="tool active" aria-label="选择"><svg class="ic"><use href="#arrow"/></svg></button>
<button class="tool" aria-label="拖动"><svg class="ic"><use href="#hand"/></svg></button>
<span class="brk"></span>
<button class="tool" aria-label="文本"><svg class="ic"><use href="#tee"/></svg></button>
<button class="tool" aria-label="富文本"><svg class="ic"><use href="#tee2"/></svg></button>
<button class="tool" aria-label="输入文本"><svg class="ic"><use href="#input"/></svg></button>
<button class="tool" aria-label="图形"><svg class="ic"><use href="#shape"/></svg></button>
<button class="tool" aria-label="列表"><svg class="ic"><use href="#list"/></svg></button>
<button class="tool" aria-label="装载器"><svg class="ic"><use href="#hatch"/></svg></button>
<button class="tool" aria-label="3D"><svg class="ic"><use href="#cube"/></svg></button>
<span class="brk"></span>
<button class="tool" aria-label="组合"><svg class="ic"><use href="#group"/></svg></button>
<button class="tool" aria-label="节点"><svg class="ic"><use href="#nodes"/></svg></button>
<span class="brk"></span>
<button class="tool" aria-label="左对齐"><svg class="ic"><use href="#al"/></svg></button>
<button class="tool" aria-label="水平居中"><svg class="ic"><use href="#ac"/></svg></button>
<button class="tool" aria-label="右对齐"><svg class="ic"><use href="#ar"/></svg></button>
<span class="brk"></span>
<button class="tool" aria-label="顶对齐"><svg class="ic"><use href="#at"/></svg></button>
<button class="tool" aria-label="垂直居中"><svg class="ic"><use href="#am"/></svg></button>
<button class="tool" aria-label="底对齐"><svg class="ic"><use href="#ab"/></svg></button>
<span class="brk"></span>
<button class="tool" aria-label="相同宽度"><svg class="ic"><use href="#sw"/></svg></button>
<button class="tool" aria-label="相同高度"><svg class="ic"><use href="#sh"/></svg></button>
<span class="brk"></span>
<button class="tool" aria-label="垂直间距"><svg class="ic"><use href="#eh"/></svg></button>
<button class="tool" aria-label="水平间距"><svg class="ic"><use href="#ew"/></svg></button>
<button class="tool" aria-label="表格"><svg class="ic"><use href="#grid4"/></svg></button>
</div>
<div class="d-flex flex-column flex-grow-1">
<div class="ctrlbar d-flex align-items-center">
<svg class="ic"><use href="#cbox"/></svg><span class="me-1">button</span>
<button class="btn page">0:up</button>
<button class="btn page">1:down</button>
<button class="btn page active">2:over</button>
<button class="btn page">3:selectedOver</button>
<button class="act"><svg class="ic ic-12"><use href="#plus"/></svg>增加控制器</button>
</div>
<div class="stagewrap d-flex flex-grow-1">
<div class="stage flex-grow-1">
<div class="guide-h g-top"></div><div class="guide-h g-bottom"></div>
<div class="guide-v g-left"></div><div class="guide-v g-right"></div>
<svg class="sprite" width="194" height="66">
<rect x="0" y="1" width="192" height="63" fill="#999"/>
<rect x="1" y="1" width="190" height="63" rx="30" fill="#8791b0"/>
<rect x="7" y="6" width="180" height="54" rx="24" fill="#3a72f7" stroke="#6384dc"/>
<text class="startlabel" x="62" y="43">Start!</text>
<rect x=".5" y=".5" width="193" height="64" fill="none" stroke="#0a53c8"/>
<rect x=".5" y=".5" width="193" height="64" fill="none" stroke="#3f8be8" stroke-dasharray="5 7"/>
<circle cx="97" cy="33" r="2.500" fill="#fff" stroke="#000"/>
<g fill="#0a6cff" stroke="#0a4fc0"><rect x="-1.500" y="-1.500" width="5" height="5"/><rect x="94.500" y="-1.500" width="5" height="5"/><rect x="190.500" y="-1.500" width="5" height="5"/><rect x="-1.500" y="30.500" width="5" height="5"/><rect x="190.500" y="30.500" width="5" height="5"/><rect x="-1.500" y="62.500" width="5" height="5"/><rect x="94.500" y="62.500" width="5" height="5"/><rect x="190.500" y="62.500" width="5" height="5"/></g>
</svg>
</div>
</div>
</div>
</div>
</section>

<aside class="inspector d-flex flex-column flex-shrink-0">
<ul class="nav tabrow">
<li><button class="nav-link active"><svg class="ic"><use href="#insp"/></svg>检查器</button></li>
<li><button class="nav-link"><svg class="ic"><use href="#screen"/></svg>控制台</button></li>
<li><button class="nav-link"><svg class="ic"><use href="#ret"/></svg>引用</button></li>
</ul>
<div class="panelbox flex-grow-1">
<div class="fr reslink"><svg class="ic ic-20"><use href="#pill"/></svg><a href="#" class="hot">anniu @MainPkg</a></div>

<div class="hd"><svg class="ic"><use href="#tri"/></svg>基本<hr></div>
<div class="fr s6"><label class="fl" for="f-name">名称</label><select id="f-name" class="form-select pick combo w-lang"><option>n6</option></select><svg class="ic ms-2"><use href="#info"/></svg></div>
<div class="fr s2"><span class="fl">位置</span><div class="d-flex pair"><label class="ax" for="px">X</label><input id="px" class="fld pre" value="150"></div><div class="d-flex pair"><label class="ax" for="py">Y</label><input id="py" class="fld pre" value="50"></div></div>
<div class="fr"><span class="fl">尺寸</span><div class="d-flex pair"><label class="ax" for="sx">W</label><input id="sx" class="fld pre" value="300"></div><div class="d-flex pair"><label class="ax" for="sy">H</label><input id="sy" class="fld pre" value="100"></div><svg class="ic ic-12 ms-1"><use href="#tri"/></svg></div>
<div class="fr tight keepsize"><label class="tick"><input type="checkbox">原大小</label><label class="tick"><input type="checkbox">保持比例</label></div>
<div class="fr"><span class="fl">缩放</span><div class="d-flex pair"><label class="ax" for="cx">X</label><input id="cx" class="fld pre" value="1"></div><div class="d-flex pair"><label class="ax" for="cy">Y</label><input id="cy" class="fld pre" value="1"></div></div>
<div class="fr"><span class="fl">倾斜</span><div class="d-flex pair"><label class="ax" for="kx">X</label><input id="kx" class="fld pre" value="0"></div><div class="d-flex pair"><label class="ax" for="ky">Y</label><input id="ky" class="fld pre" value="0"></div></div>
<div class="fr"><span class="fl">轴心</span><div class="d-flex pair"><label class="ax" for="ox">X</label><input id="ox" class="fld pre" value="0.5"></div><div class="d-flex pair"><label class="ax" for="oy">Y</label><input id="oy" class="fld pre" value="0.5"></div><svg class="ic ic-12 ms-1"><use href="#tri"/></svg></div>
<div class="fr anchor"><label class="tick hot"><input type="checkbox" checked>同时作为锚点</label></div>
<div class="fr"><label class="fl" for="op">不透明度</label><input id="op" class="fld f-m" value="1"><label for="rot" class="rotlabel">旋转</label><input id="rot" class="fld f-m" value="0"></div>
<div class="fr s2 ps-3 gap-2"><label class="tick"><input type="checkbox">不可见</label><label class="tick hot"><input type="checkbox" checked>变灰</label><label class="tick dim"><input type="checkbox" checked>不可触摸</label></div>

<div class="hd mt-2"><svg class="ic"><use href="#tri"/></svg>图片<hr></div>
<div class="fr s6"><span class="fl">颜色</span><button class="swatch" aria-label="颜色"></button><svg class="ic ic-10 ms-2"><use href="#tri"/></svg></div>
<div class="fr"><label class="fl" for="br">亮度</label><input id="br" class="fld f-s" value="255"></div>
<div class="fr"><span class="fl">翻转</span><label class="tick flip"><input type="checkbox">左右</label><label class="tick"><input type="checkbox">上下</label></div>
<div class="fr"><label class="fl" for="fm">填充方法</label><select id="fm" class="form-select pick w-lang"><option>(无)</option></select></div>
<div class="fr s2"><label class="fl" for="fo">填充原点</label><select id="fo" class="form-select pick w-lang"><option>(无)</option></select></div>
<div class="fr tight s2"><span class="fl"></span><label class="tick"><input type="checkbox" checked>顺时针方向</label></div>
<div class="fr tight"><label class="fl" for="fa">填充比例</label><input id="fa" class="fld f-l" value="100"></div>

<div class="hd mt-2"><svg class="ic"><use href="#tri"/></svg>属性控制<hr></div>
<div class="fr mt-1 ps-1"><svg class="ic me-2"><use href="#eye"/></svg><select class="form-select pick w-ctl" aria-label="控制器"><option>button</option></select><select class="form-select pick w-pg" aria-label="页面"><option>1:down</option></select></div>
<div class="fr tight mt-1 actrow"><button class="act"><svg class="ic ic-12"><use href="#plus"/></svg>更多控制</button><button class="act"><svg class="ic"><use href="#copy"/></svg>复制</button><button class="act off"><svg class="ic"><use href="#paste"/></svg>粘贴</button></div>

<div class="hd s6"><svg class="ic"><use href="#tri"/></svg>关联<hr></div>
<div class="fr mt-1 relrow"><svg class="ic"><use href="#link2"/></svg>容器<div class="d-flex relbtns"><button class="sq" aria-label="定位"><svg class="ic"><use href="#target"/></svg></button><button class="sq" aria-label="展开"><svg class="ic"><use href="#expand"/></svg></button><button class="sq" aria-label="删除"><svg class="ic ic-10"><use href="#x"/></svg></button></div></div>
<div class="fr relpick"><select class="form-select pick w-rel" aria-label="关联"><option>未定义</option></select></div>
<div class="fr s2 actrow"><button class="act"><svg class="ic ic-12"><use href="#plus"/></svg>对其他元件</button><button class="act off"><svg class="ic"><use href="#copy"/></svg>复制</button><button class="act off"><svg class="ic"><use href="#paste"/></svg>粘贴</button></div>

<div class="hd"><svg class="ic"><use href="#tri"/></svg>效果<hr></div>
<div class="fr s10"><label class="fl" for="bm">BlendMode</label><select id="bm" class="form-select pick w-fx"><option>Normal</option></select></div>
<div class="fr"><label class="fl" for="ft">滤镜</label><select id="ft" class="form-select pick w-fx"><option>(无)</option></select></div>

<div class="hd s10"><svg class="ic"><use href="#tri"/></svg>其它<hr></div>
<div class="d-flex align-items-start mt-2"><label class="fl pt-1" for="cd">自定义数据</label><div class="memowrap"><textarea id="cd" class="fld memo d-block"></textarea><button class="sq" aria-label="编辑"><svg class="ic"><use href="#edit"/></svg></button></div></div>
</div>
</aside>
</main>

<div class="imebar d-flex">
<button>中</button><button>简</button>
<button aria-label="半角"><svg class="ic"><use href="#moon"/></svg></button>
<button aria-label="标点"><svg class="ic"><use href="#punct"/></svg></button>
<button aria-label="键盘"><svg class="ic"><use href="#keys"/></svg></button>
<button aria-label="切换"><svg class="ic"><use href="#updown"/></svg></button>
<button aria-label="设置"><svg class="ic"><use href="#cog"/></svg></button>
</div>
<script src="https://cdn.jsdelivr.net/npm/bootstrap@5.3.0/dist/js/bootstrap.bundle.min.js"></script>
</body>
</html>
